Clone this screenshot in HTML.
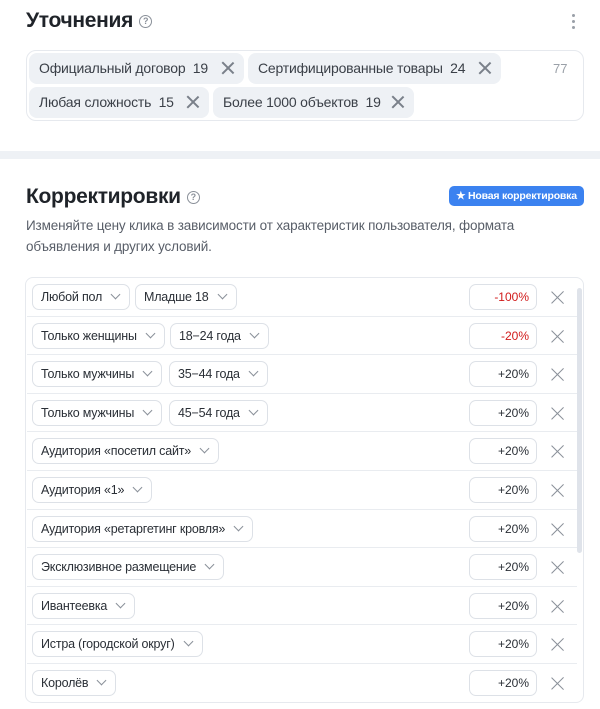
<!DOCTYPE html>
<html><head><meta charset="utf-8"><style>
*{box-sizing:border-box;margin:0;padding:0}
body{width:600px;height:709px;overflow:hidden;background:#fff;font-family:"Liberation Sans",sans-serif;color:#1f2329;position:relative}
.abs{position:absolute}
h2{position:absolute;font-size:21px;font-weight:bold;letter-spacing:-0.3px;color:#1f2329}
.q{display:inline-block;width:13px;height:13px;border:1.3px solid #8a9099;border-radius:50%;font-size:9px;text-align:center;line-height:11px;color:#8a9099;font-weight:bold;vertical-align:3px;margin-left:6px}
.chip{position:absolute;height:31px;background:#eef1f5;border-radius:8px;font-size:14px;line-height:31px;padding-left:10px;color:#3b4048;letter-spacing:-0.2px;white-space:nowrap}
.x{position:absolute;right:10px;top:9px;width:12px;height:12px}
.x:before,.x:after{content:"";position:absolute;left:5px;top:-2px;width:1.5px;height:16px;background:#7a808a;transform:rotate(45deg)}
.x:after{transform:rotate(-45deg)}
.row{position:absolute;left:27px;width:550px;height:38.6px;border-bottom:1px solid #e9ecf0}
.sel{position:absolute;top:6px;height:26px;border:1px solid #dde1e7;border-radius:7px;font-size:12.5px;line-height:24px;padding:0 8px;color:#2a2f36;letter-spacing:-0.2px;white-space:nowrap}
.sel i{display:inline-block;width:7px;height:7px;border-right:1.2px solid #8a9099;border-bottom:1.2px solid #8a9099;transform:rotate(45deg);margin-left:10px;margin-right:2px;vertical-align:3px}
.pct{position:absolute;left:442px;top:6px;width:68px;height:26px;border:1px solid #dde1e7;border-radius:7px;font-size:12px;line-height:24px;text-align:right;padding-right:7px;color:#2a2f36}
.red{color:#d11a1a}
.rx{position:absolute;left:524px;top:13px;width:13px;height:13px}
.rx:before,.rx:after{content:"";position:absolute;left:6px;top:-2px;width:1.4px;height:17px;background:#8a9099;transform:rotate(45deg)}
.rx:after{transform:rotate(-45deg)}
</style></head><body>
<h2 style="left:26px;top:9px">Уточнения<span class="q">?</span></h2>
<div class="abs" style="left:572px;top:14px;width:3px;height:3px;background:#9aa0a8;border-radius:50%;box-shadow:0 6px 0 #9aa0a8,0 12px 0 #9aa0a8"></div>
<div class="abs" style="left:26px;top:50px;width:558px;height:71px;border:1px solid #e6e9ee;border-radius:10px"></div>
<div class="chip" style="left:29px;top:53px;width:215px">Официальный договор&nbsp; 19<span class="x"></span></div>
<div class="chip" style="left:248px;top:53px;width:253px">Сертифицированные товары&nbsp; 24<span class="x"></span></div>
<div class="abs" style="left:553px;top:61px;font-size:13px;color:#9aa0a8">77</div>
<div class="chip" style="left:29px;top:87px;width:180px">Любая сложность&nbsp; 15<span class="x"></span></div>
<div class="chip" style="left:213px;top:87px;width:201px">Более 1000 объектов&nbsp; 19<span class="x"></span></div>
<div class="abs" style="left:0;top:151px;width:600px;height:8px;background:#eef1f5"></div>
<h2 style="left:26px;top:185px">Корректировки<span class="q">?</span></h2>
<div class="abs" style="left:449px;top:186px;width:135px;height:20px;background:#3b82f0;border-radius:5px;color:#fff;font-size:10.5px;line-height:20px;text-align:center;font-weight:bold;letter-spacing:-0.2px">★ Новая корректировка</div>
<div class="abs" style="left:26px;top:215px;width:540px;font-size:13.5px;line-height:21px;color:#585e68;letter-spacing:-0.15px">Изменяйте цену клика в зависимости от характеристик пользователя, формата объявления и других условий.</div>
<div class="abs" style="left:25px;top:277px;width:559px;height:426px;border:1px solid #e6e9ee;border-radius:8px"></div>
<div class="abs" style="left:577px;top:288px;width:5px;height:265px;background:#dfe3ea;border-radius:3px"></div>
<div class="row" style="top:278px"><div class="sel" style="left:5px">Любой пол<i></i></div><div class="sel" style="left:108px">Младше 18<i></i></div><div class="pct red">-100%</div><div class="rx"></div></div>
<div class="row" style="top:316.6px"><div class="sel" style="left:5px">Только женщины<i></i></div><div class="sel" style="left:143px">18−24 года<i></i></div><div class="pct red">-20%</div><div class="rx"></div></div>
<div class="row" style="top:355.2px"><div class="sel" style="left:5px">Только мужчины<i></i></div><div class="sel" style="left:142px">35−44 года<i></i></div><div class="pct">+20%</div><div class="rx"></div></div>
<div class="row" style="top:393.8px"><div class="sel" style="left:5px">Только мужчины<i></i></div><div class="sel" style="left:142px">45−54 года<i></i></div><div class="pct">+20%</div><div class="rx"></div></div>
<div class="row" style="top:432.4px"><div class="sel" style="left:5px">Аудитория «посетил сайт»<i></i></div><div class="pct">+20%</div><div class="rx"></div></div>
<div class="row" style="top:471px"><div class="sel" style="left:5px">Аудитория «1»<i></i></div><div class="pct">+20%</div><div class="rx"></div></div>
<div class="row" style="top:509.6px"><div class="sel" style="left:5px">Аудитория «ретаргетинг кровля»<i></i></div><div class="pct">+20%</div><div class="rx"></div></div>
<div class="row" style="top:548.2px"><div class="sel" style="left:5px">Эксклюзивное размещение<i></i></div><div class="pct">+20%</div><div class="rx"></div></div>
<div class="row" style="top:586.8px"><div class="sel" style="left:5px">Ивантеевка<i></i></div><div class="pct">+20%</div><div class="rx"></div></div>
<div class="row" style="top:625.4px"><div class="sel" style="left:5px">Истра (городской округ)<i></i></div><div class="pct">+20%</div><div class="rx"></div></div>
<div class="row" style="top:664px;border-bottom:none"><div class="sel" style="left:5px">Королёв<i></i></div><div class="pct">+20%</div><div class="rx"></div></div>
</body></html>
